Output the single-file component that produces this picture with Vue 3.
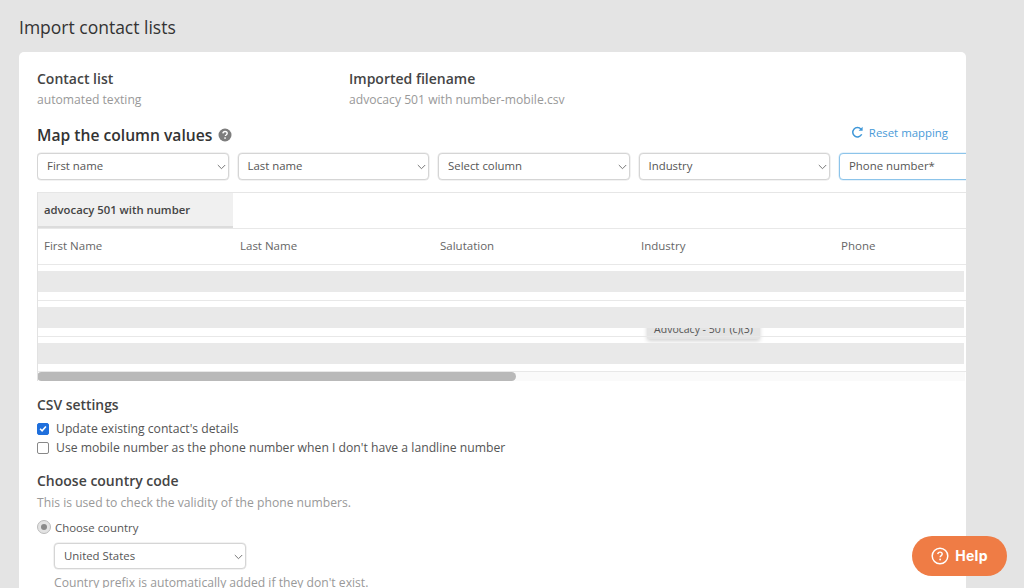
<script setup>
const selects = [
  { label: 'First name' },
  { label: 'Last name' },
  { label: 'Select column' },
  { label: 'Industry' },
  { label: 'Phone number*', focus: true },
]
const columns = ['First Name', 'Last Name', 'Salutation', 'Industry', 'Phone']
</script>

<template>
  <div class="page">
    <h1 class="title">Import contact lists</h1>
    <main class="card">
      <section class="meta">
        <div class="meta-col first">
          <div class="meta-label">Contact list</div>
          <div class="muted meta-value">automated texting</div>
        </div>
        <div class="meta-col">
          <div class="meta-label">Imported filename</div>
          <div class="muted meta-value">advocacy 501 with number-mobile.csv</div>
        </div>
      </section>

      <div class="map-head">
        <h2 class="map-title">Map the column values</h2>
        <svg class="hint" width="14" height="14" viewBox="0 0 14 14">
          <circle cx="7" cy="7" r="6.5" fill="#7d7d7d" />
          <path d="M4.9 5.4c.1-1.2 1-1.9 2.2-1.9 1.2 0 2.1.7 2.1 1.8 0 .9-.5 1.3-1.1 1.7-.5.3-.7.6-.7 1.1" fill="none" stroke="#fff" stroke-width="1.4" />
          <rect x="6.3" y="9.3" width="1.5" height="1.5" fill="#fff" />
        </svg>
        <a class="reset">
          <svg width="13" height="13" viewBox="0 0 13 13" fill="none">
            <path d="M10.7 8.3A4.7 4.7 0 1 1 10 3.2" stroke="#3f97d8" stroke-width="1.5" />
            <path d="M11.6 0.8v4h-4z" fill="#3f97d8" />
          </svg>
          Reset mapping
        </a>
      </div>

      <div class="selects">
        <div v-for="s in selects" :key="s.label" class="select" :class="{ focus: s.focus }">
          <span>{{ s.label }}</span>
          <svg v-if="!s.focus" class="chev" width="9" height="6" viewBox="0 0 9 6" fill="none">
            <path d="M.8 1l3.7 3.7L8.2 1" stroke="#777" stroke-width="1" />
          </svg>
        </div>
      </div>

      <section class="table">
        <div class="tab-row"><div class="tab">advocacy 501 with number</div></div>
        <div class="cols">
          <div v-for="c in columns" :key="c" class="col">{{ c }}</div>
        </div>
        <div class="rows">
          <div class="row"><div class="band"></div></div>
          <div class="row"><div class="band"></div></div>
          <div class="row last"><div class="band"></div></div>
          <div class="tooltip">Advocacy - 501 (c)(3)</div>
        </div>
        <div class="scrollbar"><div class="thumb"></div></div>
      </section>

      <h3 class="sub csv">CSV settings</h3>
      <label class="check">
        <span class="box on">
          <svg width="11" height="11" viewBox="0 0 11 11" fill="none"><path d="M2.3 5.8l2.2 2.2 4.2-4.8" stroke="#fff" stroke-width="1.7" /></svg>
        </span>
        Update existing contact's details
      </label>
      <label class="check">
        <span class="box"></span>
        Use mobile number as the phone number when I don't have a landline number
      </label>

      <h3 class="sub country">Choose country code</h3>
      <p class="muted note">This is used to check the validity of the phone numbers.</p>
      <label class="radio">
        <span class="dot"><i></i></span>
        Choose country
      </label>
      <div class="select country-select">
        <span>United States</span>
        <svg class="chev" width="9" height="6" viewBox="0 0 9 6" fill="none">
          <path d="M.8 1l3.7 3.7L8.2 1" stroke="#777" stroke-width="1" />
        </svg>
      </div>
      <p class="muted prefix">Country prefix is automatically added if they don't exist.</p>
    </main>

    <button class="help">
      <svg width="18" height="18" viewBox="0 0 18 18" fill="none">
        <circle cx="9" cy="9" r="7.8" stroke="#fff" stroke-width="1.5" />
        <path d="M6.8 7.1C6.9 5.8 7.8 5.1 9 5.1c1.3 0 2.2.8 2.2 1.9 0 1-.6 1.4-1.2 1.8-.6.4-.9.8-.9 1.5" stroke="#fff" stroke-width="1.4" />
        <circle cx="9.1" cy="12.5" r="0.9" fill="#fff" />
      </svg>
      <span class="help-text">Help</span>
    </button>
  </div>
</template>

<style scoped>
.page {
  position: relative;
  height: 588px;
  overflow: hidden;
  background: #e4e4e4;
  font-family: "Open Sans", sans-serif;
  color: #555;
  box-sizing: border-box;
  padding: 15px 58px 0 19px;
}
.title {
  margin: 0 0 13px;
  font-size: 17.5px;
  line-height: 24px;
  font-weight: 400;
  color: #333;
}
.card {
  background: #fff;
  border-radius: 5px;
  height: 560px;
  padding: 18px 0 0 18px;
  overflow: hidden;
  box-sizing: border-box;
}
.meta { display: flex; }
.meta-col.first { width: 312px; }
.meta-label {
  font-size: 14px;
  line-height: 18px;
  font-weight: 600;
  color: #444;
}
.muted { color: #999; font-size: 12.15px; }
.meta-value { margin-top: 3px; line-height: 18px; }
.map-head {
  display: flex;
  align-items: center;
  margin-top: 16px;
  height: 20px;
  padding-right: 18px;
}
.map-title {
  margin: 0;
  font-size: 15.65px;
  line-height: 20px;
  font-weight: 600;
  color: #333;
}
.hint { margin-left: 6px; }
.reset {
  margin-left: auto;
  margin-top: -5px;
  display: flex;
  align-items: center;
  gap: 5px;
  font-size: 11.4px;
  color: #4a9bd8;
}
.selects {
  display: flex;
  gap: 9px;
  margin-top: 7px;
  overflow: hidden;
  padding: 1px 0;
}
.select {
  position: relative;
  flex: 0 0 191.5px;
  box-sizing: border-box;
  height: 27px;
  display: flex;
  align-items: center;
  padding: 0 0 2px 9px;
  border: 1px solid #d5d5d5;
  border-radius: 4px;
  background: #fff;
  font-size: 11.4px;
  color: #555;
  box-shadow: 0 0 0 0.5px #e6e6e6;
}
.select.focus {
  border-color: #8cc4ea;
  box-shadow: 0 0 0 0.5px #cfe6f6;
  flex: 0 0 160px;
}
.chev { position: absolute; right: 2px; top: 10px; }
.table {
  margin-top: 11px;
  border-top: 1px solid #e6e6e6;
  border-left: 1px solid #e2e2e2;
  overflow: hidden;
}
.tab-row { height: 35px; border-bottom: 1px solid #e8e8e8; }
.tab {
  width: 195px;
  height: 35px;
  box-sizing: border-box;
  padding-left: 6px;
  display: flex;
  align-items: center;
  background: #f0f0f0;
  border-bottom: 2px solid #dcdcdc;
  font-size: 11.3px;
  font-weight: 600;
  color: #444;
}
.cols {
  display: grid;
  grid-template-columns: 196px 200px 201px 200px 1fr;
  height: 33px;
  padding-bottom: 2px;
  align-items: center;
  border-bottom: 1px solid #e8e8e8;
  font-size: 11.5px;
  color: #666;
}
.col { padding-left: 6px; }
.rows { position: relative; }
.row {
  position: relative;
  z-index: 1;
  height: 36px;
  box-sizing: border-box;
  padding: 6px 2px 0 0;
  border-bottom: 1px solid #e8e8e8;
}
.row.last { height: 35px; }
.band { height: 21px; background: #e9e9e9; }
.tooltip {
  position: absolute;
  z-index: 0;
  left: 609px;
  top: 54px;
  width: 113px;
  height: 20px;
  box-sizing: border-box;
  padding-top: 3px;
  background: #e4e4e4;
  border-radius: 2px;
  box-shadow: 0 2px 4px rgba(0,0,0,.18);
  font-size: 10.5px;
  line-height: 14px;
  text-align: center;
  color: #555;
}
.scrollbar {
  height: 9px;
  background: #fafafa;
  margin-left: -1px;
  width: 100%;
}
.thumb {
  width: 479px;
  height: 9px;
  border-radius: 5px;
  background: #b9b9b9;
}
.sub {
  margin: 0;
  font-size: 14px;
  line-height: 18px;
  font-weight: 600;
  color: #444;
}
.csv { margin-top: 15px; font-size: 13.9px; }
.check {
  display: flex;
  align-items: center;
  gap: 7px;
  height: 19px;
  font-size: 12.2px;
  color: #555;
}
.csv + .check { margin-top: 5px; }
.box {
  flex: none;
  width: 12px;
  height: 12px;
  box-sizing: border-box;
  border: 1px solid #888;
  border-radius: 2px;
  background: #fff;
  display: flex;
  align-items: center;
  justify-content: center;
}
.box.on { background: #1f6fdc; border-color: #1f6fdc; }
.country { margin-top: 15px; }
.note { margin: 4px 0 0; line-height: 18px; }
.radio {
  display: flex;
  align-items: center;
  gap: 4px;
  margin-top: 6px;
  height: 18px;
  font-size: 11.4px;
  color: #555;
}
.dot {
  width: 12px;
  height: 12px;
  border-radius: 50%;
  border: 1px solid #bbb;
  background: #e3e3e3;
  display: flex;
  align-items: center;
  justify-content: center;
}
.dot i { width: 6px; height: 6px; border-radius: 50%; background: #8a8a8a; }
.country-select {
  width: 192px;
  margin: 7px 0 0 17px;
  height: 26px;
}
.prefix { margin: 5px 0 0 17px; line-height: 18px; }
.help {
  position: absolute;
  left: 912px;
  top: 536px;
  width: 95px;
  height: 40px;
  border: none;
  border-radius: 20px;
  background: #ef7c45;
  color: #fff;
  font-family: Inter, "Open Sans", sans-serif;
  font-size: 14px;
  font-weight: 700;
  letter-spacing: .3px;
  display: flex;
  align-items: center;
  justify-content: center;
  gap: 6px;
  padding: 0;
}
.help-text { margin-top: -2px; }
</style>
